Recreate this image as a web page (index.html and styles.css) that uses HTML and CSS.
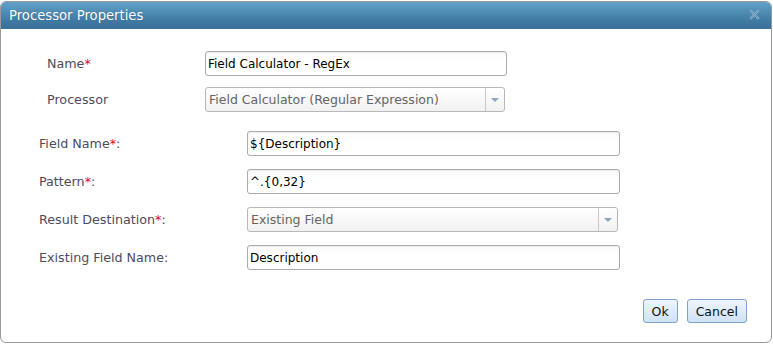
FILE: index.html
```html
<!DOCTYPE html>
<html>
<head>
<meta charset="utf-8">
<link rel="stylesheet" href="styles.css">
</head>
<body>
<div class="dialog">
  <div class="titlebar">
    <span class="title">Processor Properties</span>
    <span class="close">
      <svg width="11" height="11" viewBox="0 0 12 12"><path d="M2 2 L10 10 M10 2 L2 10" stroke="#8fb3cf" stroke-width="2.4" stroke-linecap="round"/><path d="M2 2 L10 10 M10 2 L2 10" stroke="#5f8bae" stroke-width="0.9" stroke-linecap="round"/></svg>
    </span>
  </div>
  <div class="content">
    <div class="form form-top">
      <label class="lbl">Name<span class="req">*</span></label>
      <div class="input w300">Field Calculator - RegEx</div>
      <label class="lbl">Processor</label>
      <div class="select w298"><span class="sel-text">Field Calculator (Regular Expression)</span><span class="arrow"></span></div>
    </div>
    <div class="form form-bottom">
      <label class="lbl">Field Name<span class="req">*</span>:</label>
      <div class="input w372">${Description}</div>
      <label class="lbl">Pattern<span class="req">*</span>:</label>
      <div class="input w372">^.{0,32}</div>
      <label class="lbl">Result Destination<span class="req">*</span>:</label>
      <div class="select w370"><span class="sel-text">Existing Field</span><span class="arrow"></span></div>
      <label class="lbl">Existing Field Name:</label>
      <div class="input w372">Description</div>
    </div>
    <div class="buttons">
      <button class="btn">Ok</button>
      <button class="btn">Cancel</button>
    </div>
  </div>
</div>
</body>
</html>
```

FILE: styles.css
```css
html, body {
  margin: 0;
  padding: 0;
  background: #ffffff;
}
body {
  font-family: "DejaVu Sans", Verdana, sans-serif;
  font-size: 12px;
}
.dialog {
  box-sizing: border-box;
  width: 772px;
  height: 342px;
  margin-top: 1px;
  border: 1px solid #9a9a9a;
  border-radius: 6px;
  overflow: hidden;
  display: flex;
  flex-direction: column;
  background: #fff;
}
.titlebar {
  height: 27px;
  background: linear-gradient(#62a1c9, #3f7aa3 70%, #3a6f96);
  display: flex;
  align-items: center;
  justify-content: space-between;
  padding: 0 11px 0 8px;
  flex: none;
}
.title {
  color: #ffffff;
  font-size: 13.2px;
  text-shadow: 0 0 1px rgba(0,0,0,0.3);
}
.close {
  display: flex;
  align-items: center;
  margin-top: -2px;
}
.content {
  flex: 1;
  position: relative;
  display: flex;
  flex-direction: column;
}
.form {
  display: grid;
  align-items: center;
}
.form-top {
  grid-template-columns: 158px auto;
  row-gap: 11px;
  padding: 22px 0 0 46px;
}
.form-bottom {
  grid-template-columns: 208px auto;
  row-gap: 13px;
  padding: 19px 0 0 38px;
}
.lbl {
  color: #4c4c5e;
  font-size: 12.7px;
}
.req {
  color: #e8002a;
}
.input {
  box-sizing: border-box;
  height: 25px;
  border: 1px solid #ababab;
  border-radius: 3px;
  background: linear-gradient(#fafafa, #ffffff 40%);
  box-shadow: inset 0 1px 1px rgba(0,0,0,0.06);
  padding: 0 0 0 2px;
  display: flex;
  align-items: center;
  color: #000;
  font-size: 12px;
}
.w300 { width: 302px; }
.w372 { width: 373px; }
.w298 { width: 300px; }
.w370 { width: 371px; }
.select {
  box-sizing: border-box;
  height: 25px;
  border: 1px solid #b8b8b8;
  border-radius: 3px;
  background: linear-gradient(#ffffff, #f1f1f1);
  display: flex;
  align-items: stretch;
  color: #646464;
  font-size: 12.5px;
}
.sel-text {
  flex: 1;
  display: flex;
  align-items: center;
  padding-left: 3px;
}
.arrow {
  width: 18px;
  border-left: 1px solid #c8c8c8;
  position: relative;
}
.arrow::after {
  content: "";
  position: absolute;
  left: 5px;
  top: 10px;
  border-left: 4px solid transparent;
  border-right: 4px solid transparent;
  border-top: 4px solid #8ea3c2;
}
.buttons {
  margin-top: auto;
  display: flex;
  justify-content: flex-end;
  gap: 9px;
  padding: 0 24px 19px 0;
}
.btn {
  box-sizing: border-box;
  height: 24px;
  border: 1px solid #7fa3c9;
  border-radius: 3px;
  background: linear-gradient(#eef5fc, #cfe2f6);
  font-family: "DejaVu Sans", Verdana, sans-serif;
  font-size: 12.5px;
  color: #111;
  padding: 0 8px;
  cursor: pointer;
}
```
